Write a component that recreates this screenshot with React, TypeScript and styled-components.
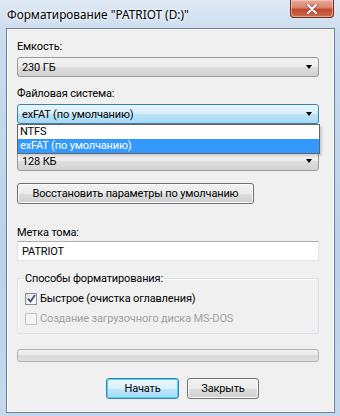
import React from 'react';
import styled, { createGlobalStyle } from 'styled-components';

const Global = createGlobalStyle`
    html, body {
        margin: 0;
        padding: 0;
        width: 340px;
        height: 416px;
        overflow: hidden;
    }
    * {
        box-sizing: border-box;
    }
`;

const Window = styled.div`
    width: 340px;
    height: 416px;
    display: flex;
    flex-direction: column;
    padding: 0 5px 3px 6px;
    background: linear-gradient(180deg, #dfe9f4 0%, #cadcee 8%, #bcd2ea 60%, #c4d8ed 100%);
    font-family: Roboto, "Noto Sans", sans-serif;
    font-size: 11px;
    letter-spacing: -0.15px;
    color: #000;
`;

const TitleBar = styled.div`
    height: 28px;
    display: flex;
    justify-content: space-between;
    align-items: flex-start;
`;

const Title = styled.div`
    padding: 6px 0 0 1px;
    font-family: "Noto Sans", sans-serif;
    font-size: 11.8px;
    letter-spacing: 0;
    line-height: 16px;
    color: #000;
    text-shadow: 0 0 6px #fff, 0 0 3px #fff;
`;

const CloseButton = styled.div`
    width: 44px;
    height: 18px;
    margin-right: 1px;
    border: 1px solid #6e2a1e;
    border-top: none;
    border-radius: 0 0 4px 4px;
    background: linear-gradient(180deg, #e9a99a 0%, #d8826e 45%, #c24a31 55%, #cf6a4a 100%);
    box-shadow: inset 0 0 0 1px rgba(255, 220, 210, 0.5);
    display: flex;
    align-items: center;
    justify-content: center;
`;

const Client = styled.div`
    flex: 1;
    display: flex;
    flex-direction: column;
    padding: 0 15px 0 10px;
    background: #f0f0f0;
    border: 1px solid #6c7f96;
    box-shadow: inset 0 0 0 1px #fbfcfd;
`;

const Label = styled.div<{ $top: number }>`
    margin-top: ${p => p.$top}px;
    height: 15px;
    line-height: 15px;
    white-space: nowrap;
`;

const ComboWrap = styled.div<{ $top: number }>`
    position: relative;
    margin-top: ${p => p.$top}px;
`;

const Combo = styled.div<{ $focused?: boolean }>`
    height: 20px;
    display: flex;
    align-items: center;
    justify-content: space-between;
    padding: 0 6px 0 4px;
    border: 1px solid ${p => (p.$focused ? '#3c7fb1' : '#9a9a9a')};
    border-radius: 3px;
    background: ${p =>
        p.$focused
            ? 'linear-gradient(180deg, #e8f5fd 0%, #d7eefb 50%, #bce4fa 51%, #a9d8f3 100%)'
            : 'linear-gradient(180deg, #f4f4f4 0%, #ececec 50%, #dedede 51%, #d2d2d2 100%)'};
    line-height: 15px;
`;

const Arrow = styled.span`
    width: 0;
    height: 0;
    border-left: 3.5px solid transparent;
    border-right: 3.5px solid transparent;
    border-top: 4px solid #000;
`;

const DropList = styled.div`
    position: absolute;
    top: 100%;
    left: 0;
    right: -1px;
    z-index: 2;
    background: #fff;
    border: 1px solid #646464;
    box-shadow: 2px 2px 2px rgba(0, 0, 0, 0.15);
`;

const DropItem = styled.div<{ $selected?: boolean }>`
    height: 14px;
    line-height: 14px;
    padding-left: 2px;
    background: ${p => (p.$selected ? '#3399ff' : '#fff')};
    color: ${p => (p.$selected ? '#fff' : '#000')};
`;

const Button = styled.div<{ $width: number; $default?: boolean }>`
    width: ${p => p.$width}px;
    height: 21px;
    display: flex;
    align-items: center;
    justify-content: center;
    border: 1px solid ${p => (p.$default ? '#3c7fb1' : '#707070')};
    border-radius: 3px;
    background: ${p =>
        p.$default
            ? 'linear-gradient(180deg, #eaf6fd 0%, #d9f0fc 50%, #bee6fd 51%, #a7d9f5 100%)'
            : 'linear-gradient(180deg, #f2f2f2 0%, #ebebeb 50%, #dddddd 51%, #cfcfcf 100%)'};
    box-shadow: ${p => (p.$default ? 'inset 0 0 0 1px #48d4f9' : 'inset 0 0 0 1px #fcfcfc')};
    white-space: nowrap;
`;

const ResetButton = styled(Button)`
    margin-top: 12px;
`;

const TextInput = styled.div`
    margin-top: 1px;
    height: 20px;
    padding-left: 4px;
    display: flex;
    align-items: center;
    background: #fff;
    border: 1px solid #e2e3ea;
    border-top-color: #abadb3;
`;

const Group = styled.fieldset`
    margin: 10px 0 0;
    padding: 0 6px 7px;
    border: 1px solid #d5dfe5;
    border-radius: 3px;
    box-shadow: inset 1px 1px 0 #fff;
    min-width: 0;
`;

const Legend = styled.legend`
    padding: 0 1px;
    line-height: 15px;
`;

const CheckRow = styled.div<{ $disabled?: boolean }>`
    margin-top: 5px;
    height: 15px;
    display: flex;
    align-items: center;
    gap: 3px;
    padding-left: 1px;
    color: ${p => (p.$disabled ? '#a0a0a0' : '#000')};
`;

const Box = styled.span<{ $disabled?: boolean }>`
    width: 12px;
    height: 12px;
    display: flex;
    align-items: center;
    justify-content: center;
    border: 1px solid ${p => (p.$disabled ? '#c4c4c4' : '#8e8f8f')};
    background: ${p =>
        p.$disabled ? '#f4f4f4' : 'linear-gradient(135deg, #dcdcdc 0%, #f6f6f6 60%, #ffffff 100%)'};
`;

const Progress = styled.div`
    margin-top: 15px;
    height: 13px;
    border: 1px solid #b2b2b2;
    border-radius: 3px;
    background: linear-gradient(180deg, #f3f3f3 0%, #e6e6e6 45%, #d6d6d6 55%, #e2e2e2 100%);
`;

const ButtonRow = styled.div`
    margin-top: 16px;
    display: flex;
    gap: 8px;
    padding-left: 89px;
`;

const Check = () => (
    <svg width="9" height="9" viewBox="0 0 9 9">
        <path d="M1 4.5 L3.5 7.5 L8 1" stroke="#3d4f7b" strokeWidth="1.8" fill="none" />
    </svg>
);

const CloseGlyph = () => (
    <svg width="12" height="10" viewBox="0 0 12 10">
        <path d="M2 1 L10 9 M10 1 L2 9" stroke="#5a1a10" strokeWidth="3.4" strokeLinecap="round" opacity="0.6" />
        <path d="M2 1 L10 9 M10 1 L2 9" stroke="#ffffff" strokeWidth="2.2" strokeLinecap="round" />
    </svg>
);

const App: React.FC = () => {
    return (
        <>
            <Global />
            <Window>
                <TitleBar>
                    <Title>Форматирование "PATRIOT (D:)"</Title>
                    <CloseButton><CloseGlyph /></CloseButton>
                </TitleBar>
                <Client>
                    <Label $top={10}>Емкость:</Label>
                    <ComboWrap $top={3}>
                        <Combo>230 ГБ<Arrow /></Combo>
                    </ComboWrap>

                    <Label $top={9}>Файловая система:</Label>
                    <ComboWrap $top={3}>
                        <Combo $focused>exFAT (по умолчанию)<Arrow /></Combo>
                        <DropList>
                            <DropItem>NTFS</DropItem>
                            <DropItem $selected>exFAT (по умолчанию)</DropItem>
                        </DropList>
                    </ComboWrap>

                    {/* the allocation-size label sits under the open list */}
                    <ComboWrap $top={27}>
                        <Combo>128 КБ<Arrow /></Combo>
                    </ComboWrap>

                    <ResetButton $width={237}>Восстановить параметры по умолчанию</ResetButton>

                    <Label $top={21}>Метка тома:</Label>
                    <TextInput>PATRIOT</TextInput>

                    <Group>
                        <Legend>Способы форматирования:</Legend>
                        <CheckRow>
                            <Box><Check /></Box>
                            Быстрое (очистка оглавления)
                        </CheckRow>
                        <CheckRow $disabled>
                            <Box $disabled />
                            Создание загрузочного диска MS-DOS
                        </CheckRow>
                    </Group>

                    <Progress />

                    <ButtonRow>
                        <Button $width={73} $default>Начать</Button>
                        <Button $width={72}>Закрыть</Button>
                    </ButtonRow>
                </Client>
            </Window>
        </>
    );
};

export default App;
